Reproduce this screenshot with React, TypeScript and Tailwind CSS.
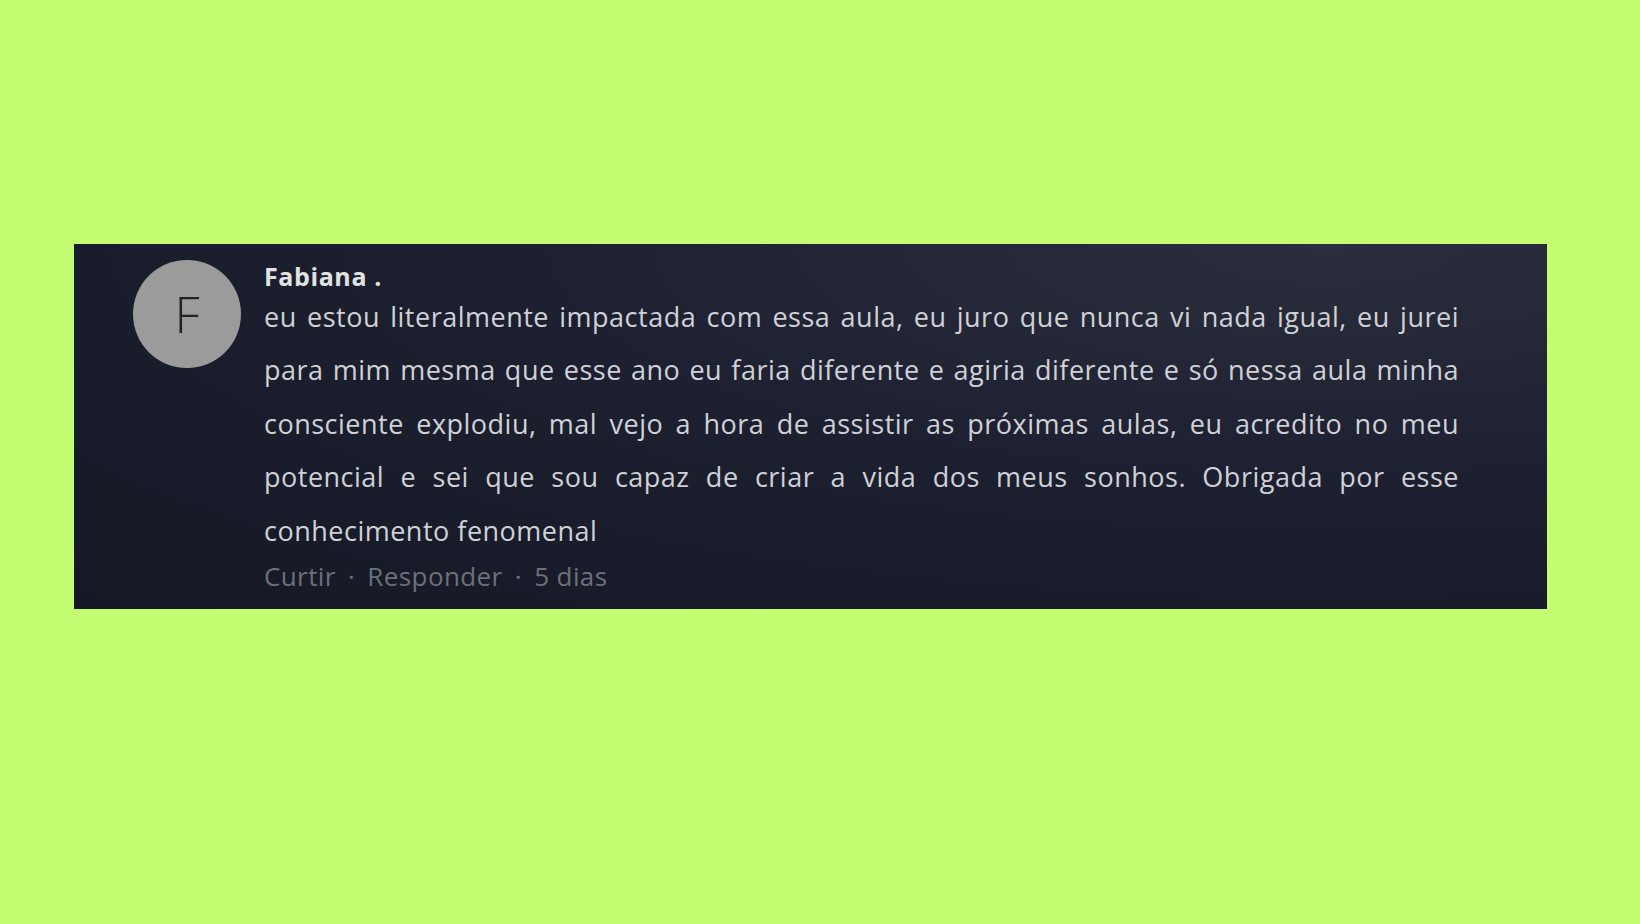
const comment = {
  author: "Fabiana .",
  initial: "F",
  lines: [
    "eu estou literalmente impactada com essa aula, eu juro que nunca vi nada igual, eu jurei",
    "para mim mesma que esse ano eu faria diferente e agiria diferente e só nessa aula minha",
    "consciente explodiu, mal vejo a hora de assistir as próximas aulas, eu acredito no meu",
    "potencial e sei que sou capaz de criar a vida dos meus sonhos. Obrigada por esse",
  ],
  lastLine: "conhecimento fenomenal",
  age: "5 dias",
};

export default function App() {
  return (
    <div className="min-h-screen w-full bg-[#c3fe72] pt-[244px] font-['Open_Sans',sans-serif]">
      <div className="ml-[74px] w-[1473px] h-[365px] bg-[radial-gradient(ellipse_at_85%_0%,#2b2e3d_0%,#1d2030_45%,#151824_100%)]">
        <div className="flex items-start pl-[59px] pr-[88px] pt-4">
          <div className="h-[108px] w-[108px] shrink-0 rounded-full bg-[#9b9b9b] flex items-center justify-center">
            <span className="text-[50px] leading-none font-light text-[#222]">{comment.initial}</span>
          </div>
          <div className="ml-[23px] flex-1">
            <div className="mt-[2px] text-[25px] leading-[28px] font-bold tracking-[0.6px] text-[#e2e2e4]">
              {comment.author}
            </div>
            <div className="text-[27px] leading-[53.4px] tracking-[0.5px] text-[#d0d1d6]">
              {comment.lines.map((line) => (
                <div key={line} className="text-justify [text-align-last:justify]">
                  {line}
                </div>
              ))}
              <div>{comment.lastLine}</div>
            </div>
            <div className="mt-[3px] text-[26px] leading-[32px] tracking-[0.4px] text-[#6d707b]">
              Curtir <span className="mx-[5px]">·</span> Responder <span className="mx-[5px]">·</span> {comment.age}
            </div>
          </div>
        </div>
      </div>
    </div>
  );
}
